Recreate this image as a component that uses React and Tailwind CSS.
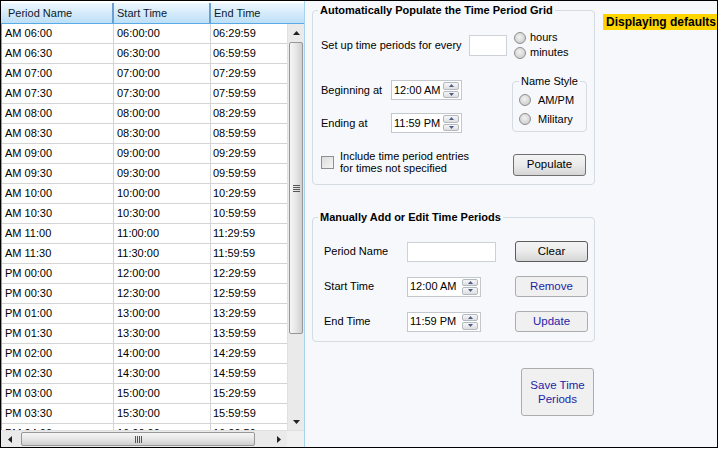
import React from "react";

const rows = [
  ["AM 06:00", "06:00:00", "06:29:59"],
  ["AM 06:30", "06:30:00", "06:59:59"],
  ["AM 07:00", "07:00:00", "07:29:59"],
  ["AM 07:30", "07:30:00", "07:59:59"],
  ["AM 08:00", "08:00:00", "08:29:59"],
  ["AM 08:30", "08:30:00", "08:59:59"],
  ["AM 09:00", "09:00:00", "09:29:59"],
  ["AM 09:30", "09:30:00", "09:59:59"],
  ["AM 10:00", "10:00:00", "10:29:59"],
  ["AM 10:30", "10:30:00", "10:59:59"],
  ["AM 11:00", "11:00:00", "11:29:59"],
  ["AM 11:30", "11:30:00", "11:59:59"],
  ["PM 00:00", "12:00:00", "12:29:59"],
  ["PM 00:30", "12:30:00", "12:59:59"],
  ["PM 01:00", "13:00:00", "13:29:59"],
  ["PM 01:30", "13:30:00", "13:59:59"],
  ["PM 02:00", "14:00:00", "14:29:59"],
  ["PM 02:30", "14:30:00", "14:59:59"],
  ["PM 03:00", "15:00:00", "15:29:59"],
  ["PM 03:30", "15:30:00", "15:59:59"],
  ["PM 04:00", "16:00:00", "16:29:59"],
];

function Tri({ dir = "up", color = "#222", w = 7, h = 4 }) {
  const pts =
    dir === "up"
      ? `0,${h} ${w},${h} ${w / 2},0`
      : dir === "down"
      ? `0,0 ${w},0 ${w / 2},${h}`
      : dir === "left"
      ? `${h},0 ${h},${w} 0,${w / 2}`
      : `0,0 0,${w} ${h},${w / 2}`;
  const vw = dir === "up" || dir === "down" ? w : h;
  const vh = dir === "up" || dir === "down" ? h : w;
  return (
    <svg width={vw} height={vh} viewBox={`0 0 ${vw} ${vh}`}>
      <polygon points={pts} fill={color} />
    </svg>
  );
}

function VScroll() {
  return (
    <div className="w-[17px] h-full flex flex-col bg-[#eaeaea] border-l border-[#e0e0e0] shrink-0">
      <div className="h-[17px] flex items-center justify-center shrink-0">
        <Tri dir="up" />
      </div>
      <div className="h-[292px] mx-[1px] mt-[1px] rounded-[2px] border border-[#979797] bg-gradient-to-r from-[#f6f6f6] via-[#e6e6e6] to-[#d0d0d0] flex flex-col items-center justify-center gap-[1px] shrink-0">
        <div className="w-[7px] h-[1px] bg-[#555]" />
        <div className="w-[7px] h-[1px] bg-[#555]" />
        <div className="w-[7px] h-[1px] bg-[#555]" />
        <div className="w-[7px] h-[1px] bg-[#555]" />
      </div>
      <div className="flex-1" />
      <div className="h-[17px] flex items-center justify-center shrink-0">
        <Tri dir="down" />
      </div>
    </div>
  );
}

function HScroll() {
  return (
    <div className="h-[17px] flex bg-[#eaeaea] border-t border-[#e0e0e0] shrink-0">
      <div className="w-[17px] flex items-center justify-center shrink-0">
        <Tri dir="left" />
      </div>
      <div className="w-[234px] my-[1px] ml-[3px] rounded-[2px] border border-[#979797] bg-gradient-to-b from-[#f6f6f6] via-[#e6e6e6] to-[#d0d0d0] flex items-center justify-center gap-[1px] shrink-0">
        <div className="w-[1px] h-[7px] bg-[#555]" />
        <div className="w-[1px] h-[7px] bg-[#555]" />
        <div className="w-[1px] h-[7px] bg-[#555]" />
        <div className="w-[1px] h-[7px] bg-[#555]" />
      </div>
      <div className="flex-1" />
      <div className="w-[17px] flex items-center justify-center shrink-0">
        <Tri dir="right" />
      </div>
      <div className="w-[17px] bg-[#f0f0f0] shrink-0" />
    </div>
  );
}

function Grid() {
  return (
    <div className="w-[304px] h-full flex flex-col bg-white border-r border-[#a6d4ef] shrink-0 pt-[2px]">
      <div className="h-[21px] flex shrink-0 bg-gradient-to-b from-[#eef7fe] to-[#bcdff7] border-b border-[#5aaae6] text-[#0c1a2c]">
        <div className="w-[113px] pl-[7px] flex items-center border-r-2 border-[#6a9fd3]">Period Name</div>
        <div className="w-[97px] pl-[3px] flex items-center border-r-2 border-[#6a9fd3]">Start Time</div>
        <div className="w-[77px] pl-[3px] flex items-center">End Time</div>
        <div className="flex-1" />
      </div>
      <div className="flex-1 flex min-h-0">
        <div className="flex-1 overflow-hidden border-l border-[#9a9a9a]">
          {rows.map((r) => (
            <div key={r[0]} className="h-[20px] flex border-b border-[#d4d4d4] shrink-0">
              <div className="w-[112px] pl-[3px] flex items-center border-r border-[#d4d4d4]">{r[0]}</div>
              <div className="w-[97px] pl-[3px] flex items-center border-r border-[#d4d4d4]">{r[1]}</div>
              <div className="flex-1 pl-[2px] flex items-center">{r[2]}</div>
            </div>
          ))}
        </div>
        <VScroll />
      </div>
      <HScroll />
    </div>
  );
}

function Radio() {
  return (
    <span className="w-[12px] h-[12px] rounded-full border border-[#8e8e8e] bg-[radial-gradient(circle_at_45%_40%,#f2f2f2,#d2d2d2_70%,#c4c4c4)] shrink-0" />
  );
}

function Spin() {
  return (
    <div className="w-[16px] h-[16px] flex flex-col gap-[1px] shrink-0">
      <div className="flex-1 flex items-center justify-center rounded-[2px] border border-[#b3b9c1] bg-gradient-to-b from-[#f7f7f7] to-[#dedede]">
        <Tri dir="up" color="#4a5d8c" w={5} h={3} />
      </div>
      <div className="flex-1 flex items-center justify-center rounded-[2px] border border-[#b3b9c1] bg-gradient-to-b from-[#f7f7f7] to-[#dedede]">
        <Tri dir="down" color="#4a5d8c" w={5} h={3} />
      </div>
    </div>
  );
}

function Picker({ value, w }) {
  return (
    <div className={`${w} h-[20px] bg-white border border-[#c3c8ce] flex items-center pl-[2px] pr-[2px] whitespace-nowrap`}>
      <span className="text-[11px]">{value}</span>
      <div className="ml-auto">
        <Spin />
      </div>
    </div>
  );
}

function GroupOne() {
  return (
    <fieldset className="w-[283px] h-[182px] border border-[#d5dbe2] rounded-[4px] flex flex-col">
      <legend className="ml-[5px] px-[2px] font-bold leading-[14px]">
        Automatically Populate the Time Period Grid
      </legend>
      <div className="mt-[13px] h-[30px] flex items-center pl-[8px]">
        <div className="w-[148px] whitespace-nowrap">Set up time periods for every</div>
        <div className="w-[38px] h-[21px] bg-white border border-[#cdd2d8]" />
        <div className="ml-[7px] flex flex-col">
          <div className="h-[15px] flex items-center gap-[4px]">
            <Radio />
            <span>hours</span>
          </div>
          <div className="h-[15px] flex items-center gap-[4px]">
            <Radio />
            <span>minutes</span>
          </div>
        </div>
      </div>
      <div className="mt-[15px] flex pl-[8px]">
        <div className="w-[191px] pt-[5px] flex flex-col gap-[13px]">
          <div className="h-[20px] flex items-center">
            <div className="w-[70px]">Beginning at</div>
            <Picker value="12:00 AM" w="w-[71px]" />
          </div>
          <div className="h-[20px] flex items-center">
            <div className="w-[70px]">Ending at</div>
            <Picker value="11:59 PM" w="w-[71px]" />
          </div>
        </div>
        <fieldset className="w-[75px] h-[57px] border border-[#d5dbe2] rounded-[4px] flex flex-col">
          <legend className="ml-[6px] px-[2px] leading-[12px]">Name Style</legend>
          <div className="mt-[7px] pl-[6px] flex flex-col gap-[7px]">
            <div className="h-[12px] flex items-center gap-[7px]">
              <Radio />
              <span>AM/PM</span>
            </div>
            <div className="h-[12px] flex items-center gap-[7px]">
              <Radio />
              <span>Military</span>
            </div>
          </div>
        </fieldset>
      </div>
      <div className="mt-[17px] flex pl-[8px]">
        <div className="w-[13px] h-[13px] mt-[6px] border border-[#8e8f8f] bg-gradient-to-br from-[#dcdcdc] to-[#f6f6f6] shrink-0" />
        <div className="ml-[6px] w-[173px] leading-[12px]">
          Include time period entries
          <br />
          for times not specified
        </div>
        <button className="mt-[4px] w-[73px] h-[22px] rounded-[3px] border border-[#707070] bg-gradient-to-b from-[#f3f3f3] via-[#ebebeb] to-[#d5d5d5] text-black text-[11.5px]">
          Populate
        </button>
      </div>
    </fieldset>
  );
}

function Btn({ children, dark }) {
  return dark ? (
    <button className="w-[73px] h-[21px] rounded-[3px] border border-[#5c5c5c] bg-gradient-to-b from-[#f3f3f3] via-[#ebebeb] to-[#d5d5d5] text-black text-[11.5px]">
      {children}
    </button>
  ) : (
    <button className="w-[73px] h-[21px] rounded-[3px] border border-[#adadad] bg-[#f0f0f0] text-[#1e1ea8] text-[11.5px]">
      {children}
    </button>
  );
}

function GroupTwo() {
  return (
    <fieldset className="mt-[25px] w-[283px] h-[132px] border border-[#d5dbe2] rounded-[4px]">
      <legend className="ml-[5px] px-[2px] font-bold leading-[14px]">Manually Add or Edit Time Periods</legend>
      <div className="mt-[17px] pl-[11px] grid grid-cols-[83px_108px_73px] gap-y-[14px] items-center">
        <div>Period Name</div>
        <div className="w-[89px] h-[20px] bg-white border border-[#cdd2d8]" />
        <Btn dark>Clear</Btn>
        <div>Start Time</div>
        <Picker value="12:00 AM" w="w-[74px]" />
        <Btn>Remove</Btn>
        <div>End Time</div>
        <Picker value="11:59 PM" w="w-[74px]" />
        <Btn>Update</Btn>
      </div>
    </fieldset>
  );
}

export default function App() {
  return (
    <div className="w-[718px] h-[449px] bg-white font-['Liberation_Sans',Arial,sans-serif] text-[11px] text-black">
      <div className="w-[718px] h-[448px] border border-black flex bg-[#f6f8fc] overflow-hidden">
        <Grid />
        <div className="flex-1 flex min-w-0">
          <div className="pl-[7px] pt-[2px] flex flex-col">
            <GroupOne />
            <GroupTwo />
            <div className="w-[283px] flex justify-end mt-[26px]">
              <button className="mr-[1px] w-[73px] h-[48px] rounded-[3px] border border-[#adadad] bg-[#f0f0f0] text-[#1e1ea8] text-[11.5px] leading-[14px]">
                Save Time
                <br />
                Periods
              </button>
            </div>
          </div>
          <div className="ml-[8px] mt-[13px] h-[16px] flex-1 bg-[#ffd500] font-bold text-[12px] leading-[16px] pl-[3px] whitespace-nowrap overflow-hidden">
            Displaying defaults
          </div>
        </div>
      </div>
    </div>
  );
}
